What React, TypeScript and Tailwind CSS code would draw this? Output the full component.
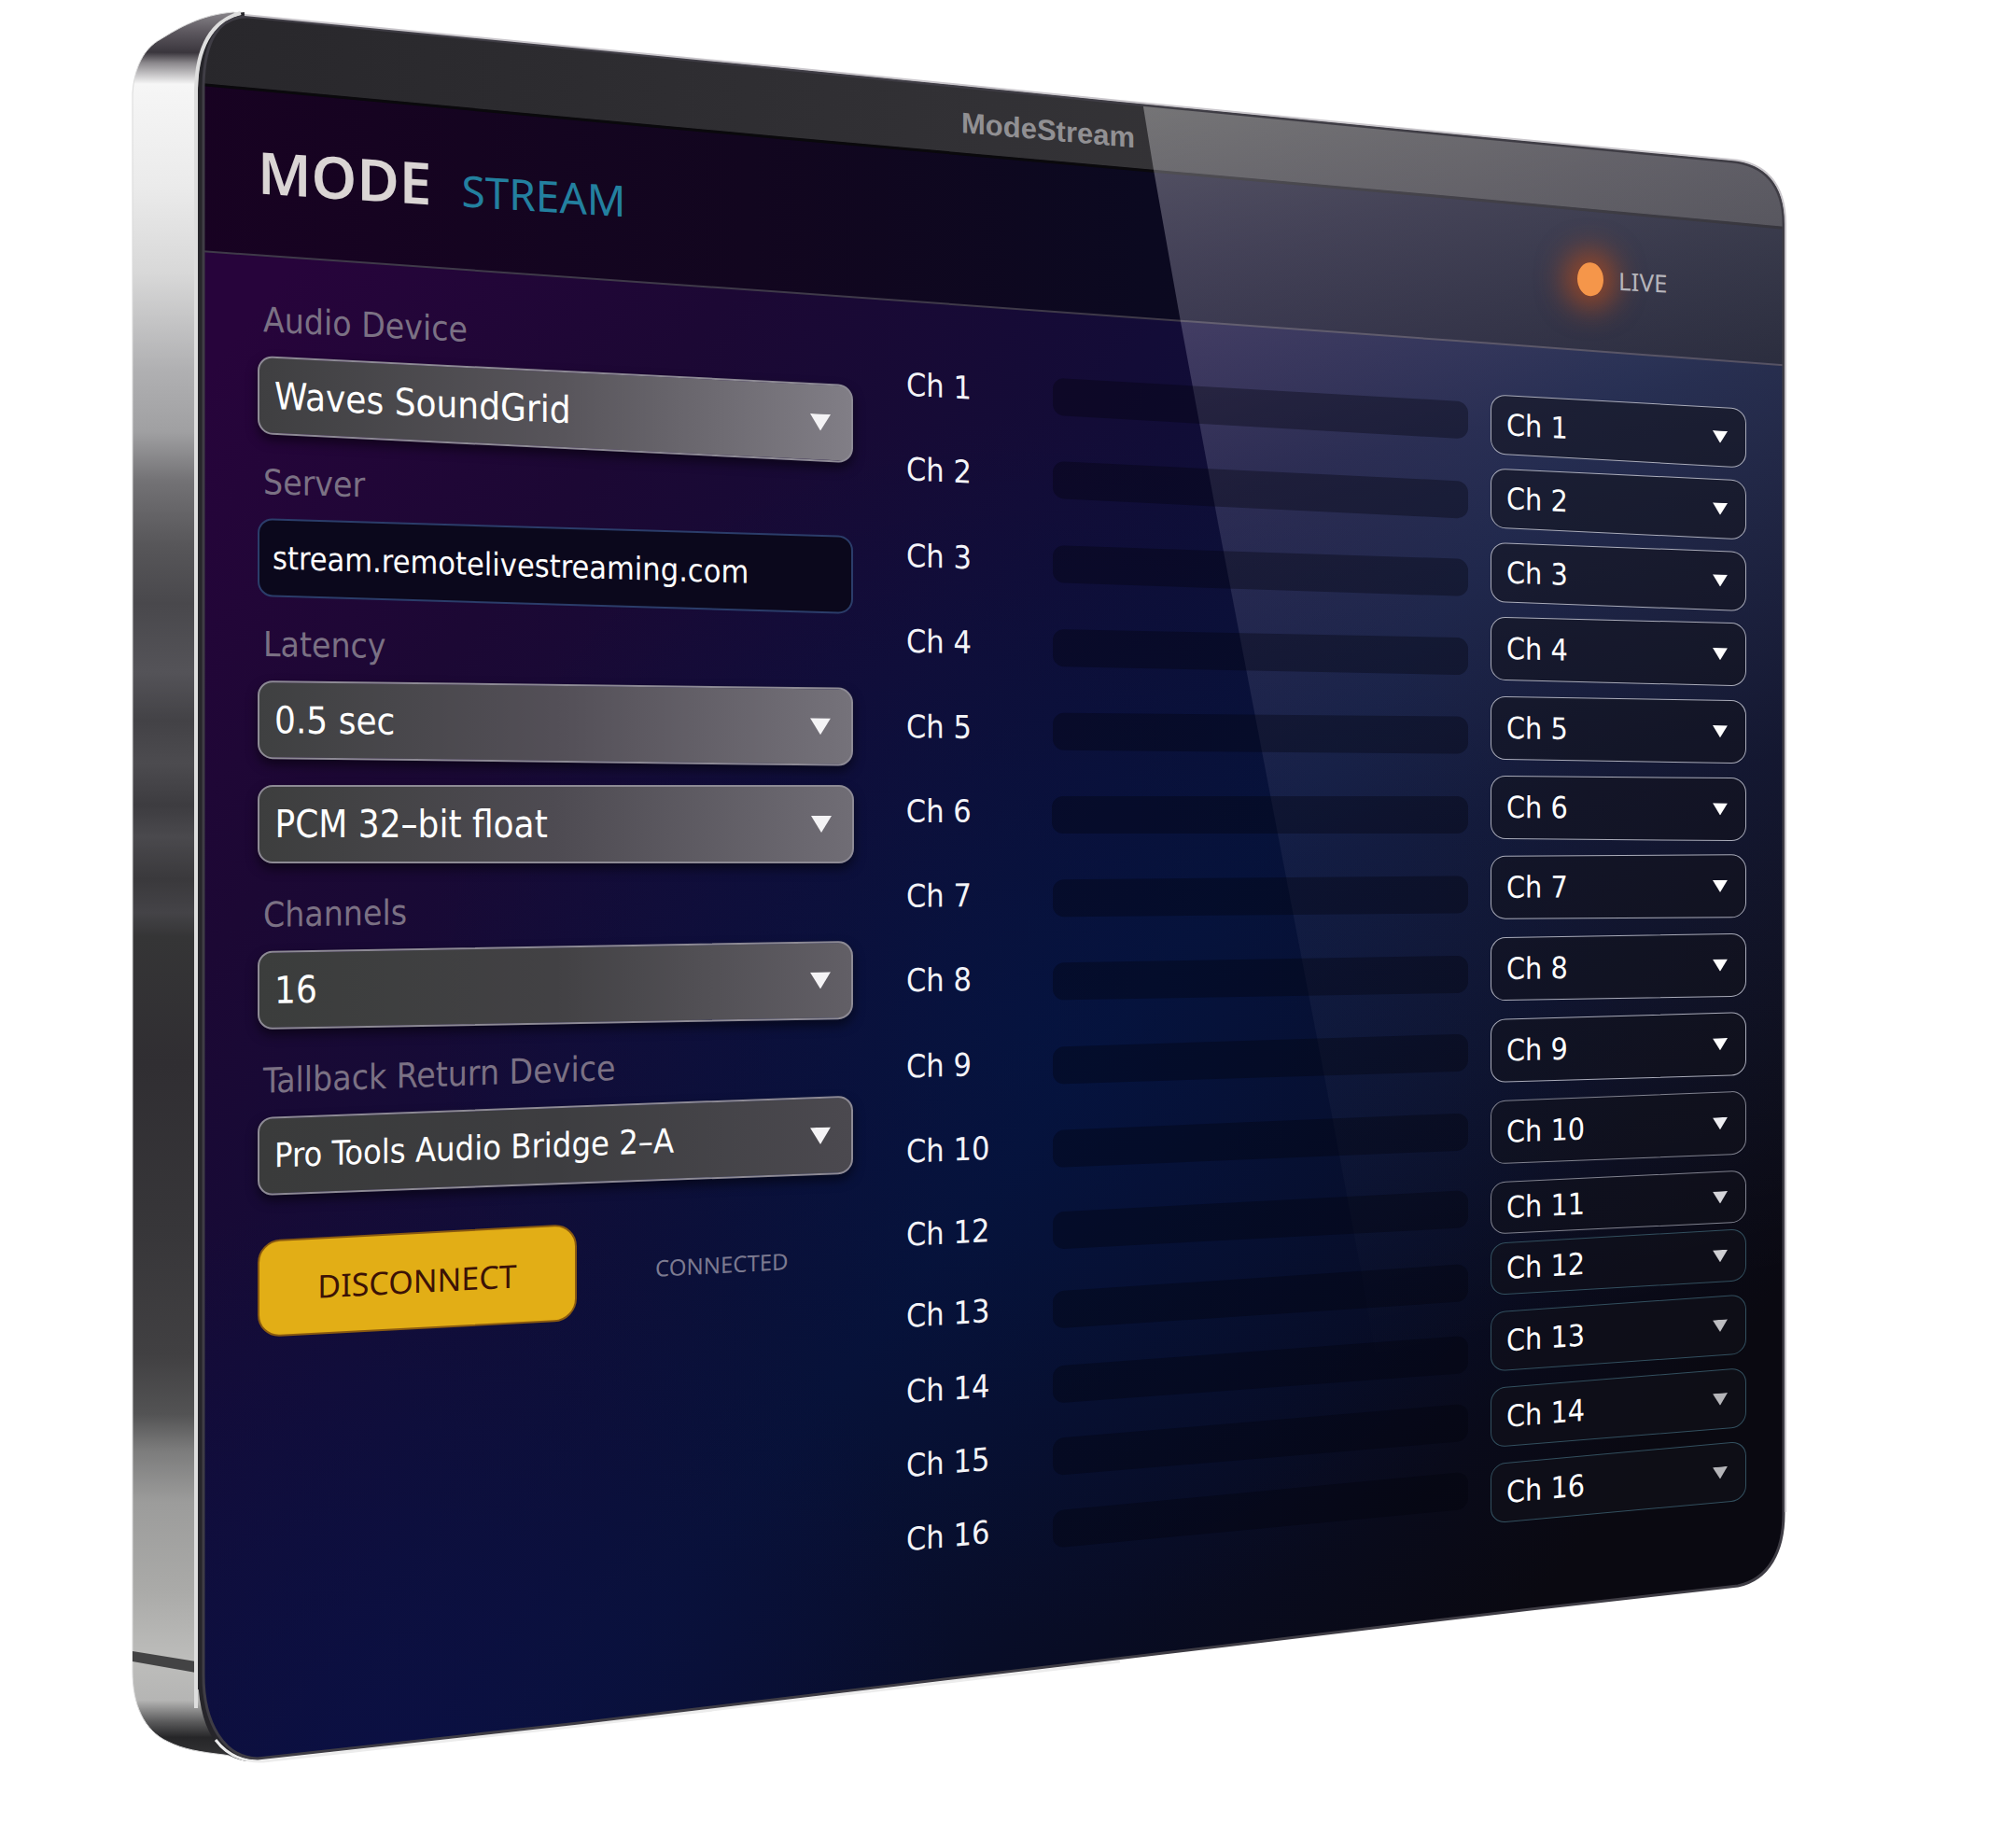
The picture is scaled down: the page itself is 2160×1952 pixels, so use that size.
import React, { useState } from "react";

const CONTROLS = [
  {
    id: "audio-device",
    label: "Audio Device",
    options: ["Waves SoundGrid"],
    text: "text-[40px]",
    group: "skew-y-[2.8deg]",
    face: "from-[#3f3f41] via-[#57545a] to-[#817e86]",
  },
  {
    id: "server",
    label: "Server",
    options: [],
    text: "text-[34px]",
    group: "mt-8 skew-y-[1.7deg]",
    face: "",
  },
  {
    id: "latency",
    label: "Latency",
    options: ["0.5 sec"],
    text: "text-[40px]",
    group: "mt-8 skew-y-[0.7deg]",
    face: "from-[#3f4041] via-[#534f57] to-[#75727a]",
  },
  {
    id: "format",
    label: "",
    options: ["PCM 32–bit float"],
    text: "text-[40px]",
    group: "mt-7",
    face: "from-[#3d3e3e] via-[#4e4b52] to-[#706d75]",
  },
  {
    id: "channels",
    label: "Channels",
    options: ["16"],
    text: "text-[40px]",
    group: "mt-9 skew-y-[-1deg]",
    face: "from-[#3b3d3c] via-[#424144] to-[#625f66]",
  },
  {
    id: "talkback",
    label: "Tallback Return Device",
    options: ["Pro Tools Audio Bridge 2–A"],
    text: "text-[36px]",
    group: "mt-9 skew-y-[-2.1deg]",
    face: "from-[#3a3b3b] via-[#3d3d40] to-[#4b494f]",
  },
];

const METERS = [
  { name: "Ch 1", row: "h-[88px] skew-y-[3.3deg]" },
  { name: "Ch 2", row: "h-[88px] skew-y-[2.8deg]" },
  { name: "Ch 3", row: "h-[88px] skew-y-[1.9deg]" },
  { name: "Ch 4", row: "h-[88px] skew-y-[1.2deg]" },
  { name: "Ch 5", row: "h-[88px] skew-y-[0.5deg]" },
  { name: "Ch 6", row: "h-[88px]" },
  { name: "Ch 7", row: "h-[88px] skew-y-[-0.5deg]" },
  { name: "Ch 8", row: "h-[88px] skew-y-[-1deg]" },
  { name: "Ch 9", row: "h-[88px] skew-y-[-1.8deg]" },
  { name: "Ch 10", row: "h-[88px] skew-y-[-2.4deg]" },
  { name: "Ch 12", row: "h-[84px] skew-y-[-3deg]" },
  { name: "Ch 13", row: "h-[82px] skew-y-[-3.8deg]" },
  { name: "Ch 14", row: "h-[76px] skew-y-[-4.2deg]" },
  { name: "Ch 15", row: "h-[76px] skew-y-[-4.8deg]" },
  { name: "Ch 16", row: "h-[76px] skew-y-[-5.4deg]" },
];

const LIGHT = "border-[#a9abb9]";
const TEAL = "border-[#33505f]";

const ROUTES = [
  { name: "Ch 1", row: "h-16 skew-y-[3.2deg]", border: LIGHT, arrow: "text-white" },
  { name: "Ch 2", row: "mt-3.5 h-16 skew-y-[2.7deg]", border: LIGHT, arrow: "text-white" },
  { name: "Ch 3", row: "mt-3.5 h-16 skew-y-[2.1deg]", border: LIGHT, arrow: "text-white" },
  { name: "Ch 4", row: "mt-3.5 h-[68px] skew-y-[1.4deg]", border: LIGHT, arrow: "text-white" },
  { name: "Ch 5", row: "mt-4 h-[68px] skew-y-[0.9deg]", border: LIGHT, arrow: "text-white" },
  { name: "Ch 6", row: "mt-4 h-[68px] skew-y-[0.5deg]", border: LIGHT, arrow: "text-white" },
  { name: "Ch 7", row: "mt-4 h-[68px] skew-y-[-0.3deg]", border: LIGHT, arrow: "text-white" },
  { name: "Ch 8", row: "mt-[18px] h-[68px] skew-y-[-1deg]", border: LIGHT, arrow: "text-white" },
  { name: "Ch 9", row: "mt-[18px] h-[68px] skew-y-[-1.7deg]", border: LIGHT, arrow: "text-white" },
  { name: "Ch 10", row: "mt-[18px] h-[68px] skew-y-[-2.3deg]", border: "border-[#80828f]", arrow: "text-[#eeeef2]" },
  { name: "Ch 11", row: "mt-[18px] h-14 skew-y-[-2.7deg]", border: "border-[#80828f]", arrow: "text-[#d5d5da]" },
  { name: "Ch 12", row: "mt-2 h-14 skew-y-[-3.3deg]", border: TEAL, arrow: "text-[#cfcfd3]" },
  { name: "Ch 13", row: "mt-4 h-16 skew-y-[-4deg]", border: TEAL, arrow: "text-[#bdbdc1]" },
  { name: "Ch 14", row: "mt-4 h-16 skew-y-[-4.6deg]", border: TEAL, arrow: "text-[#b5b5b9]" },
  { name: "Ch 16", row: "mt-4 h-16 skew-y-[-5.2deg]", border: TEAL, arrow: "text-[#b5b5b9]" },
];

function Arrow({ className }: { className: string }) {
  return (
    <svg viewBox="0 0 22 18" className={className} aria-hidden="true">
      <path d="M0 0H22L11 18Z" fill="currentColor" />
    </svg>
  );
}

/* =========================================================
   DEVICE BODY (metal side, glass face, reflections)
========================================================== */

const FACE =
  "M218 1795V92C219 42 235 17 266 18L840 74L1200 110L1560 145L1855 173C1890 176 1911 198 1911 240V1622C1911 1662 1895 1692 1862 1699L1640 1724L1480 1743L620 1846L276 1884C240 1883 218 1846 218 1795Z";

function DeviceBody() {
  return (
    <svg
      viewBox="0 0 2160 1952"
      preserveAspectRatio="none"
      className="absolute inset-0 h-full w-full"
      aria-hidden="true"
    >
      <defs>
        <linearGradient id="metal" gradientUnits="userSpaceOnUse" x1="0" y1="10" x2="-12" y2="1890">
          <stop offset="0" stopColor="#8a878c" />
          <stop offset="0.012" stopColor="#5d585f" />
          <stop offset="0.024" stopColor="#3a363d" />
          <stop offset="0.03" stopColor="#8b888c" />
          <stop offset="0.042" stopColor="#f6f6f6" />
          <stop offset="0.1" stopColor="#ebebeb" />
          <stop offset="0.15" stopColor="#d8d8d8" />
          <stop offset="0.205" stopColor="#b0b0b2" />
          <stop offset="0.24" stopColor="#a0a0a2" />
          <stop offset="0.268" stopColor="#737275" />
          <stop offset="0.305" stopColor="#575659" />
          <stop offset="0.338" stopColor="#49484c" />
          <stop offset="0.377" stopColor="#545358" />
          <stop offset="0.405" stopColor="#434246" />
          <stop offset="0.429" stopColor="#4c4b4f" />
          <stop offset="0.453" stopColor="#3d3c40" />
          <stop offset="0.471" stopColor="#4a494d" />
          <stop offset="0.495" stopColor="#3a393c" />
          <stop offset="0.514" stopColor="#444347" />
          <stop offset="0.528" stopColor="#353536" />
          <stop offset="0.6" stopColor="#302e32" />
          <stop offset="0.695" stopColor="#373639" />
          <stop offset="0.766" stopColor="#414042" />
          <stop offset="0.8" stopColor="#535354" />
          <stop offset="0.82" stopColor="#7b7b7b" />
          <stop offset="0.85" stopColor="#9c9c9b" />
          <stop offset="0.9" stopColor="#aaaaa8" />
          <stop offset="0.94" stopColor="#bdbdbb" />
          <stop offset="0.963" stopColor="#b5b5b4" />
          <stop offset="0.975" stopColor="#5c5c5d" />
          <stop offset="0.984" stopColor="#262628" />
          <stop offset="1" stopColor="#39393b" />
        </linearGradient>
        <linearGradient id="screen" gradientUnits="userSpaceOnUse" x1="180" y1="450" x2="1700" y2="1650">
          <stop offset="0" stopColor="#27043b" />
          <stop offset="0.2" stopColor="#1c0834" />
          <stop offset="0.4" stopColor="#130c37" />
          <stop offset="0.62" stopColor="#081136" />
          <stop offset="0.82" stopColor="#080c24" />
          <stop offset="1" stopColor="#0a0911" />
        </linearGradient>
        <radialGradient id="blueWash" gradientUnits="userSpaceOnUse" cx="1100" cy="1100" r="650">
          <stop offset="0" stopColor="#021647" stopOpacity="0.5" />
          <stop offset="1" stopColor="#021647" stopOpacity="0" />
        </radialGradient>
        <radialGradient id="blueCorner" gradientUnits="userSpaceOnUse" cx="420" cy="1900" r="620">
          <stop offset="0" stopColor="#0b1045" stopOpacity="0.85" />
          <stop offset="1" stopColor="#0b1045" stopOpacity="0" />
        </radialGradient>
        <linearGradient id="titleBar" x1="0" y1="0" x2="1" y2="0">
          <stop offset="0" stopColor="#28272b" />
          <stop offset="0.5" stopColor="#323135" />
          <stop offset="0.8" stopColor="#363537" />
          <stop offset="1" stopColor="#333236" />
        </linearGradient>
        <linearGradient id="headerBar" x1="0" y1="0" x2="1" y2="0">
          <stop offset="0" stopColor="#180222" />
          <stop offset="0.35" stopColor="#12061f" />
          <stop offset="0.6" stopColor="#0b0920" />
          <stop offset="1" stopColor="#0d0f1e" />
        </linearGradient>
        <linearGradient id="glare" gradientUnits="userSpaceOnUse" x1="1260" y1="110" x2="1560" y2="1450">
          <stop offset="0" stopColor="#fff" stopOpacity="0.32" />
          <stop offset="0.12" stopColor="#eeeaff" stopOpacity="0.25" />
          <stop offset="0.3" stopColor="#d9dcf8" stopOpacity="0.15" />
          <stop offset="0.6" stopColor="#cfc8e8" stopOpacity="0.06" />
          <stop offset="1" stopColor="#fff" stopOpacity="0" />
        </linearGradient>
        <clipPath id="faceClip">
          <path d={FACE} />
        </clipPath>
      </defs>

      {/* metal side */}
      <path
        d="M142 1790V100C144 72 154 52 172 42C192 30 214 16 250 13L262 16V1884L240 1880C214 1877 196 1874 180 1866C154 1854 142 1826 142 1790Z"
        fill="url(#metal)"
        stroke="#d9d9d9"
        strokeWidth="1"
      />
      <path d="M142 1769L210 1780V1792L142 1780Z" fill="#434344" />
      <path
        d="M215 1810V94C216 46 230 18 262 16M215 1790C215 1850 236 1884 270 1884"
        fill="none"
        stroke="#26252a"
        strokeWidth="6"
      />
      <path d="M210 1830V96C211 50 227 22 258 14" fill="none" stroke="#dedede" strokeWidth="4" />
      <path d="M231 1864C243 1880 260 1888 282 1887L620 1849L1200 1780" fill="none" stroke="#ececec" strokeWidth="3" />

      {/* glass face */}
      <path d={FACE} fill="url(#screen)" />
      <g clipPath="url(#faceClip)">
        <rect x="200" y="0" width="1720" height="1952" fill="url(#blueWash)" />
        <rect x="200" y="1200" width="1100" height="752" fill="url(#blueCorner)" />
        <path d="M200 0H1920V391L1560 365L840 313L200 268Z" fill="url(#headerBar)" />
        <path d="M200 268L840 313L1560 365L1920 392" fill="none" stroke="#3f3a49" strokeWidth="2" />
        <path d="M200 0H1920V244L1560 211L840 147L200 88Z" fill="url(#titleBar)" />
        <path d="M200 89L840 148L1560 212L1920 245" fill="none" stroke="#0a090c" strokeWidth="3" />
        <path d="M1221 90H1920V1500H1482L1458 1360L1428 1200L1305 560L1265 345L1236 182Z" fill="url(#glare)" />
      </g>
      <path d={FACE} fill="none" stroke="#3f3d45" strokeWidth="3" />
      <path
        d="M262 16L840 72L1200 108L1560 143L1855 171C1891 174 1913 196 1913 240V1620"
        fill="none"
        stroke="#c9c6cb"
        strokeWidth="2"
      />
    </svg>
  );
}

/* =========================================================
   PANELS
========================================================== */

function Header() {
  return (
    <header>
      <h1 className="ml-[47.3%] origin-left skew-y-[5deg] pt-28 font-['Liberation_Sans'] text-[31px] leading-10 font-bold text-[#919093]">
        ModeStream
      </h1>
      <div className="flex h-[171px] items-start justify-between">
        <div className="mt-3 flex skew-y-[3.6deg] items-baseline gap-8 leading-[64px]">
          <span className="font-['Noto_Sans'] text-[62px] font-semibold text-[#dad5d4]">MODE</span>
          <span className="font-['Noto_Sans'] text-[46px] text-[#23809f]">STREAM</span>
        </div>
        <div className="mr-[84px] flex h-11 skew-y-[3deg] items-center gap-4 self-end">
          <span className="h-9 w-7 rounded-[50%] bg-[#f5964a] shadow-[0_0_30px_14px_rgba(205,80,20,0.6)]" />
          <span className="font-['Noto_Sans'] text-[26px] text-[#b6b5bb]">LIVE</span>
        </div>
      </div>
    </header>
  );
}

function Controls() {
  const [server, setServer] = useState("stream.remotelivestreaming.com");

  return (
    <div className="flex-[637]">
      {CONTROLS.map((c) => (
        <div key={c.id} className={`origin-left ${c.group}`}>
          {c.label && (
            <label htmlFor={c.id} className="mb-[18px] block pl-1.5 text-[37px] leading-10 text-[#7b7184]">
              {c.label}
            </label>
          )}
          {c.options.length === 0 ? (
            <input
              id={c.id}
              value={server}
              onChange={(e) => setServer(e.target.value)}
              className={`h-[84px] w-full rounded-2xl border-2 border-[#2b3d6a] bg-[#0b081c] px-3.5 text-white ${c.text}`}
            />
          ) : (
            <div className="relative">
              <select
                id={c.id}
                aria-label={c.label || "Format"}
                className={`h-[84px] w-full appearance-none rounded-2xl border-2 border-[#8d8a94] bg-linear-to-r px-4 text-white shadow-[0_6px_12px_rgba(0,0,0,0.5)] ${c.text} ${c.face}`}
              >
                {c.options.map((o) => (
                  <option key={o}>{o}</option>
                ))}
              </select>
              <Arrow className="pointer-events-none absolute top-1/2 right-6 w-[22px] -translate-y-1/2 text-[#f4f3f5]" />
            </div>
          )}
        </div>
      ))}

      <div className="mt-12 flex origin-left skew-y-[-3deg] items-center">
        <button className="h-[104px] w-[342px] rounded-3xl border-2 border-[#8a5a10] bg-[#e2ae16] font-['Noto_Sans'] text-[34px] text-[#3c1206]">
          DISCONNECT
        </button>
        <span className="ml-[84px] font-['Noto_Sans'] text-[24px] text-[#7c7a90]">CONNECTED</span>
      </div>
    </div>
  );
}

function Meters() {
  return (
    <ul className="ml-14 flex-[601] pt-[66px]">
      {METERS.map((m) => (
        <li key={m.name} className={`flex items-center ${m.row}`}>
          <span className="w-[26%] pb-2 text-[34px] text-[#f4f4f8]">{m.name}</span>
          <span className="h-10 flex-1 rounded-xl bg-[#04030c]/35" />
        </li>
      ))}
    </ul>
  );
}

function Routing() {
  return (
    <div className="ml-6 flex-[273] pt-[107px]">
      {ROUTES.map((r) => (
        <div key={r.name} className={`relative ${r.row}`}>
          <select
            aria-label={`Output for ${r.name}`}
            className={`h-full w-full appearance-none rounded-2xl border bg-[#12121c]/55 px-4 text-[32px] text-white ${r.border}`}
          >
            <option>{r.name}</option>
          </select>
          <Arrow className={`pointer-events-none absolute top-1/2 right-5 w-4 -translate-y-1/2 ${r.arrow}`} />
        </div>
      ))}
    </div>
  );
}

export default function App() {
  return (
    <main className="relative min-h-screen w-full bg-white font-['DejaVu_Sans_Condensed','Noto_Sans',sans-serif]">
      <DeviceBody />
      <div className="relative pr-[13.4%] pb-60 pl-[12.8%]">
        <Header />
        <div className="flex items-start">
          <Controls />
          <Meters />
          <Routing />
        </div>
      </div>
    </main>
  );
}
